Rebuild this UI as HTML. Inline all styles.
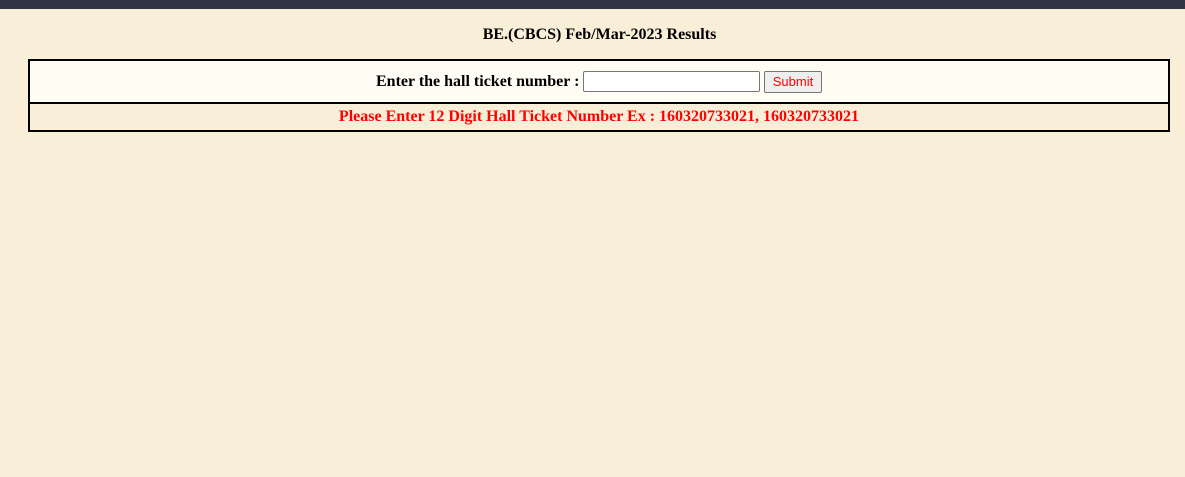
<!DOCTYPE html>
<html><head><style>
body{margin:0;width:1185px;height:477px;background:#f9efd9;position:relative;font-family:"Liberation Serif",serif;overflow:hidden}
.bar{position:absolute;left:0;top:0;width:1185px;height:9px;background:#323544}
.title{position:absolute;left:0;width:1199px;top:26px;text-align:center;font-weight:bold;font-size:16px}
.box{position:absolute;left:28px;top:59px;width:1138px;height:69px;border:2px solid #000}
.r1{position:absolute;left:0;top:0;width:1138px;height:41px;background:#fffcf4;border-bottom:2px solid #000}
.r2{position:absolute;left:0;top:43px;width:1138px;height:26px;text-align:center;color:#f00;font-weight:bold;font-size:16px;line-height:26px}
.lab{position:absolute;left:346px;top:12px;font-weight:bold;font-size:16px}
.inp{position:absolute;left:553px;top:10px;width:175px;height:19px;border:1px solid #767676;border-radius:2px;background:#fff}
.btn{position:absolute;left:734px;top:10px;width:56px;height:20px;border:1px solid #767676;border-radius:2px;background:#efefef;color:#f00;font-family:"Liberation Sans",sans-serif;font-size:13px;text-align:center;line-height:20px}
</style></head><body>
<div class="bar"></div>
<div class="title">BE.(CBCS) Feb/Mar-2023 Results</div>
<div class="box">
<div class="r1"><span class="lab">Enter the hall ticket number :</span><div class="inp"></div><div class="btn">Submit</div></div>
<div class="r2">Please Enter 12 Digit Hall Ticket Number Ex : 160320733021, 160320733021</div>
</div>
</body></html>
